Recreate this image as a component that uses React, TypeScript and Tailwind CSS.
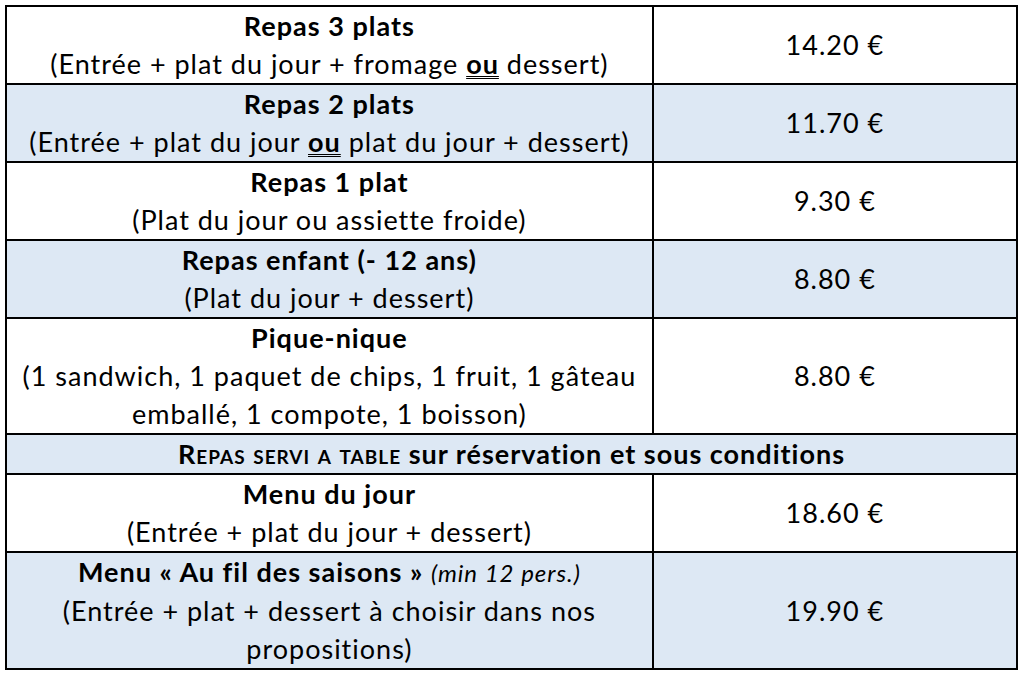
export default function App() {
  const rows = [
    {
      title: "Repas 3 plats",
      desc: (
        <>
          (Entrée + plat du jour + fromage <b className="underline decoration-double decoration-1 underline-offset-2">ou</b> dessert)
        </>
      ),
      price: "14.20 €",
      blue: false,
    },
    {
      title: "Repas 2 plats",
      desc: (
        <>
          (Entrée + plat du jour <b className="underline decoration-double decoration-1 underline-offset-2">ou</b> plat du jour + dessert)
        </>
      ),
      price: "11.70 €",
      blue: true,
    },
    { title: "Repas 1 plat", desc: "(Plat du jour ou assiette froide)", price: "9.30 €", blue: false },
    { title: "Repas enfant (- 12 ans)", desc: "(Plat du jour + dessert)", price: "8.80 €", blue: true },
    {
      title: "Pique-nique",
      desc: (
        <>
          (1 sandwich, 1 paquet de chips, 1 fruit, 1 gâteau
          <br />
          emballé, 1 compote, 1 boisson)
        </>
      ),
      price: "8.80 €",
      blue: false,
    },
  ]

  const reserved = [
    { title: <>Menu du jour</>, desc: "(Entrée + plat du jour + dessert)", price: "18.60 €", blue: false },
    {
      title: (
        <>
          Menu « Au fil des saisons » <span className="font-normal italic text-[24px]">(min 12 pers.)</span>
        </>
      ),
      desc: (
        <>
          (Entrée + plat + dessert à choisir dans nos
          <br />
          propositions)
        </>
      ),
      price: "19.90 €",
      blue: true,
    },
  ]

  const cell = "border-2 border-black text-center align-middle p-0"

  return (
    <div className="min-h-[676px] bg-white pt-[5px] pl-[5px] text-black" style={{ fontFamily: "Lato, 'Noto Sans', sans-serif" }}>
      <table className="border-collapse w-[1013px] text-[27px] leading-[38px] tracking-[1px]">
        <colgroup>
          <col className="w-[648px]" />
          <col className="w-[365px]" />
        </colgroup>
        <tbody>
          {rows.map((r, i) => (
            <tr key={i} className={r.blue ? "bg-[#dde8f4]" : "bg-white"}>
              <td className={cell}>
                <div className="font-bold">{r.title}</div>
                <div>{r.desc}</div>
              </td>
              <td className={cell}>{r.price}</td>
            </tr>
          ))}

          {/* section header */}
          <tr className="bg-[#dde8f4]">
            <td colSpan={2} className={cell + " font-bold"}>
              <span className="[font-variant:small-caps]">Repas servi a table</span> sur réservation et sous conditions
            </td>
          </tr>

          {reserved.map((r, i) => (
            <tr key={i} className={r.blue ? "bg-[#dde8f4]" : "bg-white"}>
              <td className={cell}>
                <div className="font-bold">{r.title}</div>
                <div>{r.desc}</div>
              </td>
              <td className={cell}>{r.price}</td>
            </tr>
          ))}
        </tbody>
      </table>
    </div>
  )
}
